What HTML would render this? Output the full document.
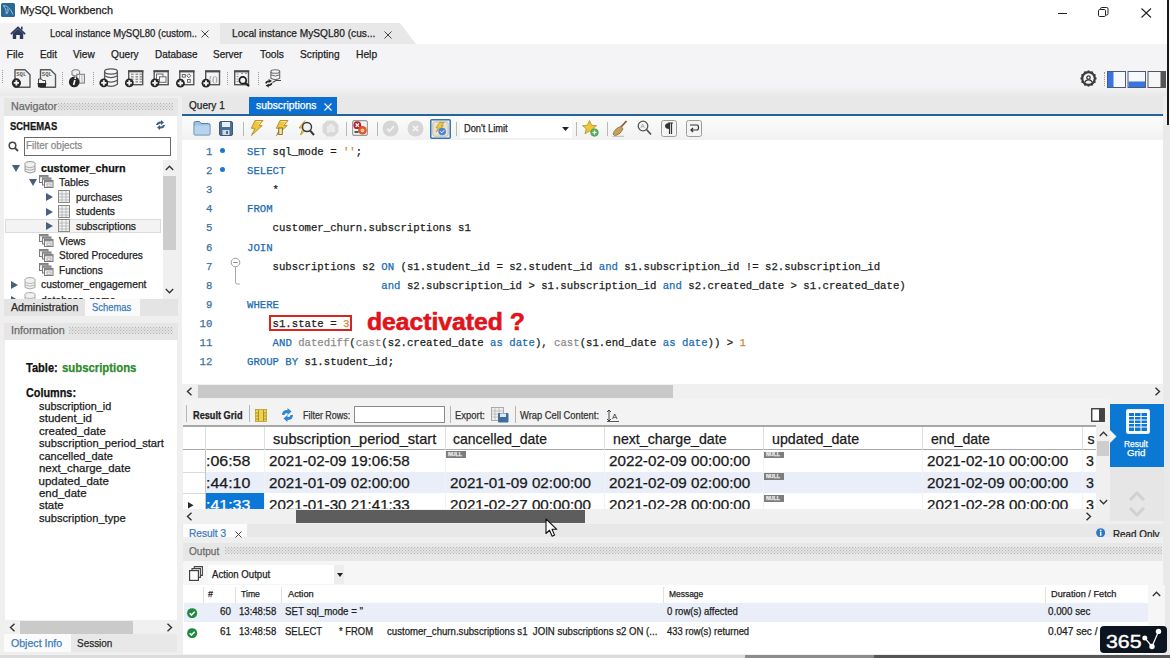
<!DOCTYPE html>
<html><head><meta charset="utf-8">
<style>
*{margin:0;padding:0;box-sizing:border-box}
html,body{width:1170px;height:658px;overflow:hidden;background:#ededed;font-family:"Liberation Sans",sans-serif;color:#222;position:relative}
.a{position:absolute}
.t{position:absolute;white-space:pre;line-height:1;transform-origin:0 0;-webkit-text-stroke:0.25px currentColor}
</style></head><body>
<div class="a" style="left:0px;top:0px;width:1170px;height:43.5px;background:#ffffff;"></div>
<div class="a" style="left:0px;top:22.7px;width:220px;height:21px;background:#f3f3f4;"></div>
<div class="a" style="left:0px;top:43.5px;width:1170px;height:53px;background:#f4f4f6;"></div>
<div class="a" style="left:0;top:86px;width:1170px;height:10px;background:linear-gradient(#f4f4f6,#e9e9e9)"></div>
<svg class="a" style="left:1.3px;top:2.9px;" width="14" height="14" viewBox="0 0 14 14"><rect x="0" y="0" width="14" height="14" rx="1.5" fill="#2a6896"/><path d="M2.3 2.5 Q8 2.5 12 11.5 M2.3 2.5 Q3.5 5 4.8 6 Q5.5 8.5 5 10.5 Q6 11.5 6.5 10 Q7.8 7.5 6.5 5.5" fill="none" stroke="#a9cbe6" stroke-width="0.9"/></svg>
<div class="t" id="t0" style="left:20px;top:5.11px;font-size:10.5px;color:#1a1a1a;font-weight:400;font-family:'Liberation Sans',sans-serif;transform:scaleX(1.0282);">MySQL Workbench</div>
<div class="a" style="left:1058px;top:13px;width:9px;height:1px;background:#222;"></div>
<svg class="a" style="left:1098px;top:7px;" width="12" height="11" viewBox="0 0 12 11"><rect x="0.5" y="2.5" width="7" height="7" rx="1.2" fill="none" stroke="#222" stroke-width="1"/><path d="M2.5 2.5 V1.8 Q2.5 0.5 3.8 0.5 H8.7 Q10 0.5 10 1.8 V6.7 Q10 8 8.7 8 H8" fill="none" stroke="#222" stroke-width="1"/></svg>
<svg class="a" style="left:1141px;top:8px;" width="11" height="10" viewBox="0 0 11 10"><path d="M0.5 0.5 L10 9.5 M10 0.5 L0.5 9.5" stroke="#222" stroke-width="1.1"/></svg>
<svg class="a" style="left:10px;top:26px;" width="16" height="13" viewBox="0 0 16 13"><path d="M0.9 8.2 L8 1.4 L15.1 8.2" fill="none" stroke="#2b3a5a" stroke-width="1.8"/><path d="M2.8 7.6 L8 2.8 L13.2 7.6 V13 H9.8 V9 H6.2 V13 H2.8 Z" fill="#2b3a5a"/><rect x="11" y="0.6" width="1.6" height="3" fill="#2b3a5a"/></svg>
<div class="t" id="t1" style="left:49.5px;top:28.23px;font-size:10.6px;color:#1e1e1e;font-weight:400;font-family:'Liberation Sans',sans-serif;transform:scaleX(0.8948);">Local instance MySQL80 (custom..</div>
<svg class="a" style="left:201px;top:30px;" width="8" height="8" viewBox="0 0 8 8"><path d="M0.5 0.5 L7.5 7.5 M7.5 0.5 L0.5 7.5" stroke="#444" stroke-width="1"/></svg>
<svg class="a" style="left:219px;top:22.7px;" width="200" height="21" viewBox="0 0 200 21"><path d="M1 0 H181 L197 21 H1 Z" fill="#e8e8e8"/></svg>
<div class="t" id="t2" style="left:232.2px;top:27.63px;font-size:10.6px;color:#1e1e1e;font-weight:400;font-family:'Liberation Sans',sans-serif;transform:scaleX(0.9588);">Local instance MySQL80 (cus...</div>
<svg class="a" style="left:384px;top:31px;" width="8" height="8" viewBox="0 0 8 8"><path d="M0.5 0.5 L7.5 7.5 M7.5 0.5 L0.5 7.5" stroke="#444" stroke-width="1"/></svg>
<div class="t" id="t3" style="left:6.6px;top:49.01px;font-size:10.5px;color:#1e1e1e;font-weight:400;font-family:'Liberation Sans',sans-serif;">File</div>
<div class="t" id="t4" style="left:39.5px;top:49.01px;font-size:10.5px;color:#1e1e1e;font-weight:400;font-family:'Liberation Sans',sans-serif;transform:scaleX(0.9340);">Edit</div>
<div class="t" id="t5" style="left:73.3px;top:49.01px;font-size:10.5px;color:#1e1e1e;font-weight:400;font-family:'Liberation Sans',sans-serif;transform:scaleX(0.9611);">View</div>
<div class="t" id="t6" style="left:110.6px;top:49.01px;font-size:10.5px;color:#1e1e1e;font-weight:400;font-family:'Liberation Sans',sans-serif;transform:scaleX(0.9652);">Query</div>
<div class="t" id="t7" style="left:154.6px;top:49.01px;font-size:10.5px;color:#1e1e1e;font-weight:400;font-family:'Liberation Sans',sans-serif;transform:scaleX(0.9432);">Database</div>
<div class="t" id="t8" style="left:213.3px;top:49.01px;font-size:10.5px;color:#1e1e1e;font-weight:400;font-family:'Liberation Sans',sans-serif;transform:scaleX(0.9503);">Server</div>
<div class="t" id="t9" style="left:260px;top:49.01px;font-size:10.5px;color:#1e1e1e;font-weight:400;font-family:'Liberation Sans',sans-serif;transform:scaleX(0.9790);">Tools</div>
<div class="t" id="t10" style="left:300px;top:49.01px;font-size:10.5px;color:#1e1e1e;font-weight:400;font-family:'Liberation Sans',sans-serif;transform:scaleX(0.9692);">Scripting</div>
<div class="t" id="t11" style="left:355.6px;top:49.01px;font-size:10.5px;color:#1e1e1e;font-weight:400;font-family:'Liberation Sans',sans-serif;transform:scaleX(0.9764);">Help</div>
<div class="a" style="left:2px;top:70px;width:1px;height:13px;border-left:1px dotted #9a9a9a"></div>
<svg class="a" style="left:0px;top:64px;" width="300" height="28" viewBox="0 0 300 28"><path d="M15 5.8 H25 L30 10.8 V23.3 H15 Z" fill="#f2f2f2" stroke="#585858" stroke-width="1.4" stroke-linejoin="round"/><text x="16.2" y="11.6" font-size="5.6" font-family="Liberation Mono" font-weight="bold" fill="#5a5a5a">SQL</text><circle cx="16.4" cy="18.9" r="4.6" fill="#262626"/><path d="M13.799999999999999 18.9 H19.0 M16.4 16.299999999999997 V21.5" stroke="#f4f4f4" stroke-width="1.9"/><path d="M40.5 5.8 H50.5 L55.5 10.8 V23.3 H40.5 Z" fill="#f2f2f2" stroke="#585858" stroke-width="1.4" stroke-linejoin="round"/><text x="41.8" y="11.6" font-size="5.6" font-family="Liberation Mono" font-weight="bold" fill="#5a5a5a">SQL</text><path d="M38.5 15 H41.5 L42.5 16.5 H45.5 V22.8 H38.5 Z" fill="#f2f2f2" stroke="#444" stroke-width="1"/><path d="M37.5 19 H46.5 L45.5 23.3 H38.2 Z" fill="#2a2a2a"/><ellipse cx="75.8" cy="7.3" rx="3.8" ry="1.6" fill="#eee" stroke="#777" stroke-width="1"/><path d="M72 7.3 V11 Q75.8 13 79.6 11 V7.3" fill="#eee" stroke="#777" stroke-width="1"/><rect x="76.8" y="10.3" width="7.6" height="8.8" fill="#f2f2f2" stroke="#777" stroke-width="1"/><path d="M79.5 10.5 V19 M82 10.5 V19" stroke="#aaa" stroke-width="0.8"/><circle cx="74.2" cy="17.9" r="5.3" fill="#262626"/><path d="M74.9 16 L73.6 21" stroke="#fff" stroke-width="1.6"/><circle cx="75.3" cy="14.2" r="0.9" fill="#fff"/><path d="M104.6 7.5 V20.3 Q111 24.5 117.4 20.3 V7.5" fill="#f7f7f7" stroke="#585858" stroke-width="1.3"/><ellipse cx="111" cy="7.5" rx="6.4" ry="2.6" fill="#f7f7f7" stroke="#585858" stroke-width="1.3"/><path d="M104.6 11.8 Q111 15.6 117.4 11.8 M104.6 16.3 Q111 20.1 117.4 16.3" fill="none" stroke="#585858" stroke-width="1.2"/><circle cx="103.8" cy="18.9" r="4.4" fill="#262626"/><path d="M101.2 18.9 H106.39999999999999 M103.8 16.299999999999997 V21.5" stroke="#f4f4f4" stroke-width="1.9"/><rect x="128.7" y="7.0" width="14.000000000000005" height="13.699999999999998" fill="#f4f4f4" stroke="#565656" stroke-width="1.4"/><rect x="128" y="6.3" width="15.400000000000006" height="2" fill="#4a4a4a"/><rect x="131" y="9.5" width="2.6" height="1.6" fill="#9a9a9a"/><rect x="131" y="12" width="2.6" height="1.6" fill="#9a9a9a"/><rect x="131" y="14.5" width="2.6" height="1.6" fill="#9a9a9a"/><rect x="131" y="17" width="2.6" height="1.6" fill="#9a9a9a"/><rect x="135.5" y="9.5" width="2.6" height="1.6" fill="#9a9a9a"/><rect x="135.5" y="12" width="2.6" height="1.6" fill="#9a9a9a"/><rect x="135.5" y="14.5" width="2.6" height="1.6" fill="#9a9a9a"/><rect x="135.5" y="17" width="2.6" height="1.6" fill="#9a9a9a"/><rect x="139.5" y="9.5" width="2.6" height="1.6" fill="#9a9a9a"/><rect x="139.5" y="12" width="2.6" height="1.6" fill="#9a9a9a"/><rect x="139.5" y="14.5" width="2.6" height="1.6" fill="#9a9a9a"/><rect x="139.5" y="17" width="2.6" height="1.6" fill="#9a9a9a"/><circle cx="129.3" cy="18.9" r="4.4" fill="#262626"/><path d="M126.70000000000002 18.9 H131.9 M129.3 16.299999999999997 V21.5" stroke="#f4f4f4" stroke-width="1.9"/><rect x="154.2" y="7.0" width="14.000000000000005" height="13.699999999999998" fill="#f4f4f4" stroke="#565656" stroke-width="1.4"/><rect x="153.5" y="6.3" width="15.400000000000006" height="2" fill="#4a4a4a"/><rect x="156.5" y="10" width="6.5" height="5.5" fill="none" stroke="#6a6a6a" stroke-width="1"/><rect x="159.5" y="12.8" width="6.5" height="5.5" fill="#f4f4f4" stroke="#6a6a6a" stroke-width="1"/><circle cx="154.9" cy="18.9" r="4.4" fill="#262626"/><path d="M152.3 18.9 H157.5 M154.9 16.299999999999997 V21.5" stroke="#f4f4f4" stroke-width="1.9"/><rect x="179.79999999999998" y="7.1000000000000005" width="14.000000000000005" height="13.599999999999998" fill="#f4f4f4" stroke="#565656" stroke-width="1.4"/><rect x="179.1" y="6.4" width="15.400000000000006" height="2" fill="#4a4a4a"/><rect x="182.3" y="10.5" width="3" height="2.6" fill="none" stroke="#6a6a6a" stroke-width="1"/><path d="M188.8 9.8 L190.8 11.8 L188.8 13.8 L186.8 11.8 Z" fill="none" stroke="#6a6a6a" stroke-width="1"/><rect x="187.5" y="15.5" width="2.8" height="2.8" fill="none" stroke="#6a6a6a" stroke-width="1"/><circle cx="180.4" cy="19.2" r="4.4" fill="#262626"/><path d="M177.8 19.2 H183.0 M180.4 16.599999999999998 V21.8" stroke="#f4f4f4" stroke-width="1.9"/><rect x="205.7" y="7.1000000000000005" width="13.799999999999988" height="13.599999999999998" fill="#f4f4f4" stroke="#565656" stroke-width="1.4"/><rect x="205" y="6.4" width="15.199999999999989" height="2" fill="#4a4a4a"/><text x="208.3" y="17.8" font-size="8" font-family="Liberation Serif" fill="#777">{()</text><circle cx="206" cy="19.2" r="4.4" fill="#262626"/><path d="M203.4 19.2 H208.6 M206 16.599999999999998 V21.8" stroke="#f4f4f4" stroke-width="1.9"/><rect x="234.7" y="7.1000000000000005" width="13.799999999999988" height="13.599999999999998" fill="#f4f4f4" stroke="#565656" stroke-width="1.4"/><rect x="234" y="6.4" width="15.199999999999989" height="2" fill="#4a4a4a"/><path d="M236.5 10 H238.5 M236.5 12.5 H238.5 M236.5 15 H238.5 M236.5 17.5 H238.5 M241 9.5 H243 M245 9.5 H247" stroke="#9a9a9a" stroke-width="1"/><circle cx="242.8" cy="16.2" r="3.4" fill="#f4f4f4" stroke="#1e1e1e" stroke-width="1.7"/><path d="M245.3 18.7 L249 22.3" stroke="#1e1e1e" stroke-width="2"/><path d="M270.9 7.5 V14.3 Q275.3 17 279.7 14.3 V7.5" fill="#f4f4f4" stroke="#6a6a6a" stroke-width="1.1"/><ellipse cx="275.3" cy="7.5" rx="4.4" ry="1.8" fill="#f4f4f4" stroke="#6a6a6a" stroke-width="1.1"/><path d="M270.9 10.8 Q275.3 13.3 279.7 10.8" fill="none" stroke="#6a6a6a" stroke-width="1"/><path d="M265 19 Q266 16.3 269 16.3 L268.3 14.8 L272 17 L268.3 19.2 L269 18 Q267 18 266.5 19.8 Z" fill="#262626"/><path d="M272.5 19.5 Q271.5 22.3 268.5 22.3 L269.2 23.8 L265.5 21.6 L269.2 19.4 L268.5 20.6 Q270.5 20.6 271 18.8 Z" fill="#262626"/><path d="M272.5 18.5 L276 16.5 H281" stroke="#444" stroke-width="1.2" fill="none"/></svg>
<div class="a" style="left:62px;top:72px;width:1px;height:13px;border-left:1px dotted #9a9a9a"></div>
<div class="a" style="left:93px;top:72px;width:1px;height:13px;border-left:1px dotted #9a9a9a"></div>
<div class="a" style="left:227px;top:72px;width:1px;height:13px;border-left:1px dotted #9a9a9a"></div>
<div class="a" style="left:258px;top:72px;width:1px;height:13px;border-left:1px dotted #9a9a9a"></div>
<svg class="a" style="left:1080px;top:70px;" width="17" height="17" viewBox="0 0 17 17"><rect x="7.6" y="0.4" width="1.8" height="2.4" fill="#3a3a3a" transform="rotate(0 8.5 8.5)"/><rect x="7.6" y="0.4" width="1.8" height="2.4" fill="#3a3a3a" transform="rotate(30 8.5 8.5)"/><rect x="7.6" y="0.4" width="1.8" height="2.4" fill="#3a3a3a" transform="rotate(60 8.5 8.5)"/><rect x="7.6" y="0.4" width="1.8" height="2.4" fill="#3a3a3a" transform="rotate(90 8.5 8.5)"/><rect x="7.6" y="0.4" width="1.8" height="2.4" fill="#3a3a3a" transform="rotate(120 8.5 8.5)"/><rect x="7.6" y="0.4" width="1.8" height="2.4" fill="#3a3a3a" transform="rotate(150 8.5 8.5)"/><rect x="7.6" y="0.4" width="1.8" height="2.4" fill="#3a3a3a" transform="rotate(180 8.5 8.5)"/><rect x="7.6" y="0.4" width="1.8" height="2.4" fill="#3a3a3a" transform="rotate(210 8.5 8.5)"/><rect x="7.6" y="0.4" width="1.8" height="2.4" fill="#3a3a3a" transform="rotate(240 8.5 8.5)"/><rect x="7.6" y="0.4" width="1.8" height="2.4" fill="#3a3a3a" transform="rotate(270 8.5 8.5)"/><rect x="7.6" y="0.4" width="1.8" height="2.4" fill="#3a3a3a" transform="rotate(300 8.5 8.5)"/><rect x="7.6" y="0.4" width="1.8" height="2.4" fill="#3a3a3a" transform="rotate(330 8.5 8.5)"/><circle cx="8.5" cy="8.5" r="6.3" fill="none" stroke="#3a3a3a" stroke-width="2.2"/><circle cx="8.5" cy="7.6" r="1.7" fill="#fff" stroke="#3a3a3a" stroke-width="1.3"/><path d="M5 12.3 Q5.5 9.8 8.5 9.8 Q11.5 9.8 12 12.3" fill="none" stroke="#3a3a3a" stroke-width="1.3"/></svg>
<div class="a" style="left:1104px;top:72px;width:1px;height:14px;border-left:1px dotted #9a9a9a"></div>
<svg class="a" style="left:1107px;top:70px;" width="60" height="18" viewBox="0 0 60 18"><rect x="0.5" y="1.5" width="18" height="16" fill="#f6f8fc" stroke="#4a5a78" stroke-width="1"/><rect x="1" y="2" width="5.5" height="15" fill="#3b74e0"/><rect x="21" y="1.5" width="17.5" height="16" fill="#f6f8fc" stroke="#4a5a78" stroke-width="1"/><rect x="21.5" y="11.5" width="16.5" height="5.5" fill="#3b74e0"/><rect x="41" y="1.5" width="17.5" height="16" fill="#f6f6f6" stroke="#555" stroke-width="1"/><rect x="53.5" y="2" width="5" height="15" fill="#555"/></svg>
<div class="a" style="left:0px;top:96px;width:1170px;height:562px;background:#efefef;"></div>
<div class="a" style="left:1163px;top:125px;width:7px;height:533px;background:#e9e9e9;"></div>
<div class="a" style="left:1167.2px;top:0px;width:1.4px;height:124.5px;background:#1a1a1a;"></div>
<div class="a" style="left:1168.6px;top:0px;width:1.4px;height:124.5px;background:#f8f8f8;"></div>
<div class="a" style="left:4px;top:98px;width:174px;height:18px;background:#e6e6e6;"></div>
<div class="t" id="t12" style="left:11px;top:100.51px;font-size:10.5px;color:#6a6a6a;font-weight:400;font-family:'Liberation Sans',sans-serif;transform:scaleX(1.0233);">Navigator</div>
<svg class="a" style="left:58px;top:103px;" width="115" height="7" viewBox="0 0 115 7"><defs><pattern id="dp1" width="3" height="3" patternUnits="userSpaceOnUse"><rect x="0" y="0" width="1.1" height="1.1" fill="#b4b4b4"/><rect x="1.5" y="1.5" width="1.1" height="1.1" fill="#b4b4b4"/></pattern></defs><rect width="115" height="7" fill="url(#dp1)"/></svg>
<div class="a" style="left:4px;top:116px;width:173px;height:183px;background:#ffffff;"></div>
<div class="t" id="t13" style="left:10px;top:120.81px;font-size:10.5px;color:#161616;font-weight:700;font-family:'Liberation Sans',sans-serif;transform:scaleX(0.8988);">SCHEMAS</div>
<svg class="a" style="left:154px;top:120px;" width="13" height="10" viewBox="0 0 13 10"><path d="M2 5 Q3 1 7 1.5 L7 0 L10 2.5 L7 5 L7 3.5 Q4.5 3.5 4 5 Z M11 5 Q10 9 6 8.5 L6 10 L3 7.5 L6 5 L6 6.5 Q8.5 6.5 9 5 Z" fill="#3b5f8a"/></svg>
<svg class="a" style="left:8px;top:141px;" width="11" height="11" viewBox="0 0 11 11"><circle cx="4.5" cy="4.5" r="3.3" fill="none" stroke="#444" stroke-width="1.5"/><path d="M7 7 L10 10" stroke="#444" stroke-width="1.8"/></svg>
<div class="a" style="left:23.8px;top:137.4px;width:147.7px;height:18.4px;background:#ffffff;border:1px solid #6a6a6a"></div>
<div class="t" id="t14" style="left:26px;top:141.23px;font-size:10px;color:#8a8a8a;font-weight:400;font-family:'Liberation Sans',sans-serif;transform:scaleX(0.9932);">Filter objects</div>
<svg class="a" style="left:11.5px;top:164.5px" width="8" height="7" viewBox="0 0 8 7"><path d="M0 0 H8 L4 7 Z" fill="#4a5f80"/></svg>
<svg class="a" style="left:23.5px;top:160.8px" width="12" height="13" viewBox="0 0 12 13"><ellipse cx="6" cy="2.5" rx="5" ry="2" fill="#f0f0f0" stroke="#999"/><path d="M1 2.5 V10.5 Q6 13.5 11 10.5 V2.5" fill="#f0f0f0" stroke="#999"/><path d="M1 5.5 Q6 8 11 5.5 M1 8 Q6 10.5 11 8" fill="none" stroke="#999" stroke-width="0.8"/></svg>
<div class="t" id="t15" style="left:41.2px;top:162.71px;font-size:10.5px;color:#111;font-weight:700;font-family:'Liberation Sans',sans-serif;transform:scaleX(1.0282);">customer_churn</div>
<svg class="a" style="left:28.5px;top:179.3px" width="8" height="7" viewBox="0 0 8 7"><path d="M0 0 H8 L4 7 Z" fill="#4a5f80"/></svg>
<svg class="a" style="left:39px;top:174.5px" width="15" height="13" viewBox="0 0 15 13"><rect x="0.5" y="0.5" width="8.5" height="7" fill="#f0f0f0" stroke="#7a7a7a" stroke-width="1"/><rect x="0.5" y="0.5" width="8.5" height="1.8" fill="#8a8a8a"/><rect x="3.5" y="3" width="8.5" height="7" fill="#f0f0f0" stroke="#7a7a7a" stroke-width="1"/><rect x="3.5" y="3" width="8.5" height="1.8" fill="#8a8a8a"/><rect x="5.5" y="5.5" width="8.5" height="7" fill="#f0f0f0" stroke="#7a7a7a" stroke-width="1"/><rect x="5.5" y="5.5" width="8.5" height="1.8" fill="#8a8a8a"/><rect x="8" y="9" width="4" height="2.5" fill="none" stroke="#9a9a9a" stroke-width="0.7"/></svg>
<div class="t" id="t16" style="left:59px;top:177.73px;font-size:10px;color:#1e1e1e;font-weight:400;font-family:'Liberation Sans',sans-serif;transform:scaleX(1.0378);">Tables</div>
<div class="a" style="left:5.2px;top:219.4px;width:155.6px;height:13.6px;background:#f3f3f3;border:1px solid #dcdcdc"></div>
<svg class="a" style="left:45.5px;top:193.0px" width="7" height="8" viewBox="0 0 7 8"><path d="M0 0 L7 4 L0 8 Z" fill="#4a5f80"/></svg>
<svg class="a" style="left:57.7px;top:190.0px" width="12" height="13" viewBox="0 0 12 13"><rect x="0.5" y="0.5" width="11" height="12" fill="#f2f2f2" stroke="#888"/><path d="M4 1 V12 M8 1 V12 M1 4 H11 M1 7 H11 M1 10 H11" stroke="#aaa" stroke-width="0.7"/></svg>
<div class="t" id="t17" style="left:76px;top:192.53px;font-size:10px;color:#1e1e1e;font-weight:400;font-family:'Liberation Sans',sans-serif;transform:scaleX(1.0056);">purchases</div>
<svg class="a" style="left:45.5px;top:207.7px" width="7" height="8" viewBox="0 0 7 8"><path d="M0 0 L7 4 L0 8 Z" fill="#4a5f80"/></svg>
<svg class="a" style="left:57.7px;top:204.7px" width="12" height="13" viewBox="0 0 12 13"><rect x="0.5" y="0.5" width="11" height="12" fill="#f2f2f2" stroke="#888"/><path d="M4 1 V12 M8 1 V12 M1 4 H11 M1 7 H11 M1 10 H11" stroke="#aaa" stroke-width="0.7"/></svg>
<div class="t" id="t18" style="left:76px;top:207.23px;font-size:10px;color:#1e1e1e;font-weight:400;font-family:'Liberation Sans',sans-serif;transform:scaleX(1.0314);">students</div>
<svg class="a" style="left:45.5px;top:222.4px" width="7" height="8" viewBox="0 0 7 8"><path d="M0 0 L7 4 L0 8 Z" fill="#4a5f80"/></svg>
<svg class="a" style="left:57.7px;top:219.4px" width="12" height="13" viewBox="0 0 12 13"><rect x="0.5" y="0.5" width="11" height="12" fill="#f2f2f2" stroke="#888"/><path d="M4 1 V12 M8 1 V12 M1 4 H11 M1 7 H11 M1 10 H11" stroke="#aaa" stroke-width="0.7"/></svg>
<div class="t" id="t19" style="left:76px;top:221.94px;font-size:10px;color:#1e1e1e;font-weight:400;font-family:'Liberation Sans',sans-serif;transform:scaleX(1.0281);">subscriptions</div>
<svg class="a" style="left:39px;top:234.0px" width="15" height="13" viewBox="0 0 15 13"><rect x="0.5" y="0.5" width="8.5" height="7" fill="#f0f0f0" stroke="#7a7a7a" stroke-width="1"/><rect x="0.5" y="0.5" width="8.5" height="1.8" fill="#8a8a8a"/><rect x="3.5" y="3" width="8.5" height="7" fill="#f0f0f0" stroke="#7a7a7a" stroke-width="1"/><rect x="3.5" y="3" width="8.5" height="1.8" fill="#8a8a8a"/><rect x="5.5" y="5.5" width="8.5" height="7" fill="#f0f0f0" stroke="#7a7a7a" stroke-width="1"/><rect x="5.5" y="5.5" width="8.5" height="1.8" fill="#8a8a8a"/><rect x="8" y="9" width="4" height="2.5" fill="none" stroke="#9a9a9a" stroke-width="0.7"/></svg>
<div class="t" id="t20" style="left:58.6px;top:236.53px;font-size:10px;color:#1e1e1e;font-weight:400;font-family:'Liberation Sans',sans-serif;transform:scaleX(0.9962);">Views</div>
<svg class="a" style="left:39px;top:248.60000000000002px" width="15" height="13" viewBox="0 0 15 13"><rect x="0.5" y="0.5" width="8.5" height="7" fill="#f0f0f0" stroke="#7a7a7a" stroke-width="1"/><rect x="0.5" y="0.5" width="8.5" height="1.8" fill="#8a8a8a"/><rect x="3.5" y="3" width="8.5" height="7" fill="#f0f0f0" stroke="#7a7a7a" stroke-width="1"/><rect x="3.5" y="3" width="8.5" height="1.8" fill="#8a8a8a"/><rect x="5.5" y="5.5" width="8.5" height="7" fill="#f0f0f0" stroke="#7a7a7a" stroke-width="1"/><rect x="5.5" y="5.5" width="8.5" height="1.8" fill="#8a8a8a"/><rect x="8" y="9" width="4" height="2.5" fill="none" stroke="#9a9a9a" stroke-width="0.7"/></svg>
<div class="t" id="t21" style="left:58.6px;top:251.14px;font-size:10px;color:#1e1e1e;font-weight:400;font-family:'Liberation Sans',sans-serif;transform:scaleX(1.0061);">Stored Procedures</div>
<svg class="a" style="left:39px;top:263.2px" width="15" height="13" viewBox="0 0 15 13"><rect x="0.5" y="0.5" width="8.5" height="7" fill="#f0f0f0" stroke="#7a7a7a" stroke-width="1"/><rect x="0.5" y="0.5" width="8.5" height="1.8" fill="#8a8a8a"/><rect x="3.5" y="3" width="8.5" height="7" fill="#f0f0f0" stroke="#7a7a7a" stroke-width="1"/><rect x="3.5" y="3" width="8.5" height="1.8" fill="#8a8a8a"/><rect x="5.5" y="5.5" width="8.5" height="7" fill="#f0f0f0" stroke="#7a7a7a" stroke-width="1"/><rect x="5.5" y="5.5" width="8.5" height="1.8" fill="#8a8a8a"/><rect x="8" y="9" width="4" height="2.5" fill="none" stroke="#9a9a9a" stroke-width="0.7"/></svg>
<div class="t" id="t22" style="left:58.6px;top:265.74px;font-size:10px;color:#1e1e1e;font-weight:400;font-family:'Liberation Sans',sans-serif;transform:scaleX(1.0079);">Functions</div>
<svg class="a" style="left:10.5px;top:281px" width="7" height="8" viewBox="0 0 7 8"><path d="M0 0 L7 4 L0 8 Z" fill="#4a5f80"/></svg>
<svg class="a" style="left:23.6px;top:277px" width="12" height="13" viewBox="0 0 12 13"><ellipse cx="6" cy="2.5" rx="5" ry="2" fill="#f0f0f0" stroke="#aaa"/><path d="M1 2.5 V10.5 Q6 13.5 11 10.5 V2.5" fill="#f0f0f0" stroke="#aaa"/><path d="M1 5.5 Q6 8 11 5.5 M1 8 Q6 10.5 11 8" fill="none" stroke="#aaa" stroke-width="0.8"/></svg>
<div class="t" id="t23" style="left:41.4px;top:280.04px;font-size:10px;color:#1e1e1e;font-weight:400;font-family:'Liberation Sans',sans-serif;transform:scaleX(1.0313);">customer_engagement</div>
<div class="a" style="left:4px;top:290px;width:158px;height:9px;overflow:hidden"><svg class="a" style="left:6.5px;top:6px" width="7" height="8" viewBox="0 0 7 8"><path d="M0 0 L7 4 L0 8 Z" fill="#4a5f80"/></svg><svg class="a" style="left:19.6px;top:2px" width="12" height="13" viewBox="0 0 12 13"><ellipse cx="6" cy="2.5" rx="5" ry="2" fill="#f0f0f0" stroke="#aaa"/><path d="M1 2.5 V10.5 Q6 13.5 11 10.5 V2.5" fill="#f0f0f0" stroke="#aaa"/><path d="M1 5.5 Q6 8 11 5.5 M1 8 Q6 10.5 11 8" fill="none" stroke="#aaa" stroke-width="0.8"/></svg><div class="t" style="left:37.4px;top:5.6px;font-size:10px;color:#1e1e1e;transform:scaleX(1.04)">database_name</div></div>
<div class="a" style="left:162.6px;top:160px;width:14px;height:139px;background:#f0f0f0;"></div>
<div class="a" style="left:162.6px;top:176px;width:13px;height:73.7px;background:#cdcdcd;"></div>
<svg class="a" style="left:165px;top:165px;" width="9" height="6" viewBox="0 0 9 6"><path d="M0.8 5 L4.5 1.2 L8.2 5" fill="none" stroke="#333" stroke-width="1.3"/></svg>
<svg class="a" style="left:165px;top:288px;" width="9" height="6" viewBox="0 0 9 6"><path d="M0.8 1 L4.5 4.8 L8.2 1" fill="none" stroke="#333" stroke-width="1.3"/></svg>
<div class="a" style="left:4px;top:299px;width:174px;height:17px;background:#e4e4e4;"></div>
<div class="a" style="left:85.3px;top:299px;width:54.3px;height:17px;background:#fafafa;"></div>
<div class="t" id="t24" style="left:10.9px;top:301.51px;font-size:10.5px;color:#2a2a2a;font-weight:400;font-family:'Liberation Sans',sans-serif;transform:scaleX(1.0131);">Administration</div>
<div class="t" id="t25" style="left:91.6px;top:301.51px;font-size:10.5px;color:#3c7bbd;font-weight:400;font-family:'Liberation Sans',sans-serif;transform:scaleX(0.8954);">Schemas</div>
<div class="a" style="left:4px;top:322.6px;width:174px;height:17.6px;background:#e6e6e6;"></div>
<div class="t" id="t26" style="left:11.4px;top:324.91px;font-size:10.5px;color:#6a6a6a;font-weight:400;font-family:'Liberation Sans',sans-serif;transform:scaleX(1.0242);">Information</div>
<svg class="a" style="left:69px;top:327px;" width="104" height="7" viewBox="0 0 104 7"><defs><pattern id="dp2" width="3" height="3" patternUnits="userSpaceOnUse"><rect x="0" y="0" width="1.1" height="1.1" fill="#b4b4b4"/><rect x="1.5" y="1.5" width="1.1" height="1.1" fill="#b4b4b4"/></pattern></defs><rect width="104" height="7" fill="url(#dp2)"/></svg>
<div class="a" style="left:4.5px;top:340px;width:172px;height:280.3px;background:#ffffff;"></div>
<div class="t" id="t27" style="left:26px;top:362.14px;font-size:12px;color:#111;font-weight:700;font-family:'Liberation Sans',sans-serif;transform:scaleX(0.9201);">Table:</div>
<div class="t" id="t28" style="left:61.9px;top:362.14px;font-size:12px;color:#2d8a2d;font-weight:700;font-family:'Liberation Sans',sans-serif;transform:scaleX(0.9455);">subscriptions</div>
<div class="t" id="t29" style="left:26px;top:386.84px;font-size:12px;color:#111;font-weight:700;font-family:'Liberation Sans',sans-serif;transform:scaleX(0.9034);">Columns:</div>
<div class="t" id="t30" style="left:38.5px;top:400.87px;font-size:11.5px;color:#1a1a1a;font-weight:400;font-family:'Liberation Sans',sans-serif;transform:scaleX(0.9424);">subscription_id</div>
<div class="t" id="t31" style="left:38.5px;top:413.32px;font-size:11.5px;color:#1a1a1a;font-weight:400;font-family:'Liberation Sans',sans-serif;transform:scaleX(0.9966);">student_id</div>
<div class="t" id="t32" style="left:38.5px;top:425.77px;font-size:11.5px;color:#1a1a1a;font-weight:400;font-family:'Liberation Sans',sans-serif;transform:scaleX(0.9949);">created_date</div>
<div class="t" id="t33" style="left:38.5px;top:438.22px;font-size:11.5px;color:#1a1a1a;font-weight:400;font-family:'Liberation Sans',sans-serif;transform:scaleX(0.9720);">subscription_period_start</div>
<div class="t" id="t34" style="left:38.5px;top:450.67px;font-size:11.5px;color:#1a1a1a;font-weight:400;font-family:'Liberation Sans',sans-serif;transform:scaleX(0.9538);">cancelled_date</div>
<div class="t" id="t35" style="left:38.5px;top:463.12px;font-size:11.5px;color:#1a1a1a;font-weight:400;font-family:'Liberation Sans',sans-serif;transform:scaleX(0.9937);">next_charge_date</div>
<div class="t" id="t36" style="left:38.5px;top:475.57px;font-size:11.5px;color:#1a1a1a;font-weight:400;font-family:'Liberation Sans',sans-serif;">updated_date</div>
<div class="t" id="t37" style="left:38.5px;top:488.02px;font-size:11.5px;color:#1a1a1a;font-weight:400;font-family:'Liberation Sans',sans-serif;transform:scaleX(0.9902);">end_date</div>
<div class="t" id="t38" style="left:38.5px;top:500.47px;font-size:11.5px;color:#1a1a1a;font-weight:400;font-family:'Liberation Sans',sans-serif;transform:scaleX(0.9905);">state</div>
<div class="t" id="t39" style="left:38.5px;top:512.92px;font-size:11.5px;color:#1a1a1a;font-weight:400;font-family:'Liberation Sans',sans-serif;transform:scaleX(0.9676);">subscription_type</div>
<div class="a" style="left:4.5px;top:620.3px;width:172.5px;height:13.7px;background:#f0f0f0;"></div>
<div class="a" style="left:20.3px;top:621px;width:112.7px;height:12.5px;background:#cacaca;"></div>
<svg class="a" style="left:9px;top:623px;" width="7" height="9" viewBox="0 0 7 9"><path d="M5.5 0.8 L1.5 4.5 L5.5 8.2" fill="none" stroke="#333" stroke-width="1.4"/></svg>
<svg class="a" style="left:166px;top:623px;" width="7" height="9" viewBox="0 0 7 9"><path d="M1.5 0.8 L5.5 4.5 L1.5 8.2" fill="none" stroke="#333" stroke-width="1.4"/></svg>
<div class="a" style="left:4px;top:634px;width:173px;height:18px;background:#e8e8e8;"></div>
<div class="a" style="left:4px;top:634px;width:66.6px;height:18px;background:#fbfbfb;"></div>
<div class="t" id="t40" style="left:11px;top:638.11px;font-size:10.5px;color:#3c7bbd;font-weight:400;font-family:'Liberation Sans',sans-serif;transform:scaleX(1.0082);">Object Info</div>
<div class="t" id="t41" style="left:76.6px;top:638.11px;font-size:10.5px;color:#2a2a2a;font-weight:400;font-family:'Liberation Sans',sans-serif;transform:scaleX(0.9476);">Session</div>
<div class="a" style="left:0px;top:654.5px;width:1170px;height:1px;background:#d6d6d6;"></div>
<div class="a" style="left:182px;top:96.4px;width:981px;height:17.6px;background:#e8e8e8;"></div>
<div class="t" id="t42" style="left:188.8px;top:99.61px;font-size:10.5px;color:#222;font-weight:400;font-family:'Liberation Sans',sans-serif;transform:scaleX(0.9583);">Query 1</div>
<div class="a" style="left:249px;top:96.5px;width:88px;height:18px;background:#0b6fd1;"></div>
<div class="t" id="t43" style="left:255.8px;top:99.61px;font-size:10.5px;color:#ffffff;font-weight:400;font-family:'Liberation Sans',sans-serif;transform:scaleX(0.9856);">subscriptions</div>
<svg class="a" style="left:323.5px;top:102.5px;" width="8" height="8" viewBox="0 0 8 8"><path d="M0.5 0.5 L7.5 7.5 M7.5 0.5 L0.5 7.5" stroke="#fff" stroke-width="1.1"/></svg>
<div class="a" style="left:182px;top:113.6px;width:981px;height:2.4px;background:#24649c;"></div>
<div class="a" style="left:182px;top:116px;width:981px;height:24px;background:linear-gradient(#fbfcfd,#f1f1f1)"></div>
<svg class="a" style="left:193px;top:120px;" width="18" height="16" viewBox="0 0 18 16"><path d="M1 3 Q1 1.5 2.5 1.5 H6.5 L8 3.5 H15.5 Q17 3.5 17 5 V14 Q17 15 16 15 H2 Q1 15 1 14 Z" fill="#9cc2e2" stroke="#5a7fa5" stroke-width="1"/><rect x="1.5" y="5.5" width="15" height="9" fill="#b7d4ee"/></svg>
<svg class="a" style="left:219px;top:121px;" width="14" height="15" viewBox="0 0 14 15"><rect x="0.5" y="0.5" width="13" height="14" rx="1.5" fill="#4d6f94" stroke="#3e5878"/><rect x="3" y="1" width="8" height="5" fill="#e8eef5"/><rect x="3.5" y="9" width="7" height="5" fill="#cfd9e4"/><rect x="7" y="10" width="2" height="3" fill="#4d6f94"/></svg>
<div class="a" style="left:242.5px;top:122px;width:1px;height:14px;background:#b8b8b8;"></div>
<svg class="a" style="left:249px;top:120px;" width="15" height="16" viewBox="0 0 15 16"><path d="M6 0.5 H14 L9.8 5.6 H13.2 L2.5 15.5 L6 8.3 H2.3 Z" fill="#efc43e" stroke="#b38b22" stroke-width="0.9" stroke-linejoin="round"/><path d="M7 1.5 H12 L8.5 5.8" fill="none" stroke="#fbe9a0" stroke-width="0.8"/></svg>
<svg class="a" style="left:274px;top:120px;" width="15" height="16" viewBox="0 0 15 16"><path d="M6 0.5 H14 L9.8 5.6 H13.2 L2.5 15.5 L6 8.3 H2.3 Z" fill="#efc43e" stroke="#b38b22" stroke-width="0.9" stroke-linejoin="round"/><path d="M7 1.5 H12 L8.5 5.8" fill="none" stroke="#fbe9a0" stroke-width="0.8"/><rect x="4.8" y="8" width="3.5" height="6.5" fill="#f7e6a0" stroke="#6a5a2a" stroke-width="0.8"/></svg>
<svg class="a" style="left:298px;top:120px;" width="17" height="17" viewBox="0 0 17 17"><path d="M7 0.5 L1 8 H5 L2.5 15 L9 8.5" fill="#f2c94c" stroke="#b8902a" stroke-width="0.9"/><circle cx="9" cy="7" r="4.5" fill="#eef2f6" stroke="#3a3a3a" stroke-width="1.4"/><path d="M12 10.5 L16 15" stroke="#3a3a3a" stroke-width="2"/></svg>
<svg class="a" style="left:322px;top:120px;" width="17" height="17" viewBox="0 0 17 17"><path d="M5 0.5 H12 L16.5 5 V12 L12 16.5 H5 L0.5 12 V5 Z" fill="#d9d9d9"/><path d="M6 13 V6 M8 12 V4 M10 12 V4 M12 12 V6" stroke="#f2f2f2" stroke-width="1.4"/></svg>
<div class="a" style="left:346.3px;top:122px;width:1px;height:14px;background:#b8b8b8;"></div>
<svg class="a" style="left:352px;top:120px;" width="16" height="16" viewBox="0 0 16 16"><rect x="0.6" y="0.6" width="14.8" height="14.8" rx="2" fill="#f2f2f2" stroke="#9a9a9a" stroke-width="1.1"/><circle cx="5.3" cy="5.2" r="3.9" fill="#b5232a"/><path d="M3.6 3.5 L7 6.9 M7 3.5 L3.6 6.9" stroke="#fff" stroke-width="1.2"/><circle cx="10.5" cy="10.3" r="4.3" fill="#e0552a"/><circle cx="10.5" cy="10.6" r="2" fill="#f6c6a8"/><rect x="2.5" y="11" width="4" height="2" fill="#555"/></svg>
<div class="a" style="left:376.7px;top:122px;width:1px;height:14px;background:#b8b8b8;"></div>
<svg class="a" style="left:382px;top:120px;" width="17" height="17" viewBox="0 0 17 17"><circle cx="8.5" cy="8.5" r="8" fill="#d6d6d6"/><path d="M5 8.7 L7.5 11.2 L12 6.2" stroke="#f4f4f4" stroke-width="1.8" fill="none"/></svg>
<svg class="a" style="left:407px;top:120px;" width="17" height="17" viewBox="0 0 17 17"><circle cx="8.5" cy="8.5" r="8" fill="#d6d6d6"/><path d="M5.8 5.8 L11.2 11.2 M11.2 5.8 L5.8 11.2" stroke="#f4f4f4" stroke-width="1.8"/></svg>
<svg class="a" style="left:430px;top:118.5px;" width="21" height="20" viewBox="0 0 21 20"><rect x="0.75" y="0.75" width="19.5" height="18.5" rx="1" fill="#eef3f8" stroke="#3b74b0" stroke-width="1.5"/><rect x="2.8" y="2.8" width="15.4" height="14.4" rx="2" fill="#e9e2cf" stroke="#b9b2a0" stroke-width="0.8"/><path d="M9.5 3.5 H14 L11.5 6.8 H13.5 L6 13 L8.3 8.8 H6 Z" fill="#eec43e" stroke="#a88a2a" stroke-width="0.6"/><circle cx="12.2" cy="12.5" r="3.8" fill="#4f84d4"/><path d="M10.4 12.4 L11.8 13.8 L14.2 11.3" stroke="#fff" stroke-width="1" fill="none"/></svg>
<div class="a" style="left:456px;top:122px;width:1px;height:14px;background:#b8b8b8;"></div>
<div class="a" style="left:459.6px;top:119px;width:112.4px;height:19px;background:#ffffff;"></div>
<div class="t" id="t44" style="left:464.4px;top:123.84px;font-size:10px;color:#1e1e1e;font-weight:400;font-family:'Liberation Sans',sans-serif;transform:scaleX(0.9289);">Don't Limit</div>
<svg class="a" style="left:562px;top:127px;" width="7" height="4" viewBox="0 0 7 4"><path d="M0 0 H7 L3.5 4 Z" fill="#222"/></svg>
<div class="a" style="left:575.6px;top:122px;width:1px;height:14px;background:#b8b8b8;"></div>
<svg class="a" style="left:582px;top:120px;" width="17" height="17" viewBox="0 0 17 17"><path d="M7.5 0.5 L9.6 5.3 L14.5 5.6 L10.7 8.8 L12 13.8 L7.5 11 L3 13.8 L4.3 8.8 L0.5 5.6 L5.4 5.3 Z" fill="#f0c53a" stroke="#b88f1c" stroke-width="0.8"/><circle cx="12.5" cy="12.5" r="3.8" fill="#5cb85c" stroke="#3a8a3a" stroke-width="0.6"/><path d="M10.5 12.5 H14.5 M12.5 10.5 V14.5" stroke="#fff" stroke-width="1.2"/></svg>
<div class="a" style="left:606.7px;top:122px;width:1px;height:14px;background:#b8b8b8;"></div>
<svg class="a" style="left:612px;top:120px;" width="16" height="17" viewBox="0 0 16 17"><path d="M9 7 L14.5 1" stroke="#8a5a2a" stroke-width="1.8"/><path d="M1 14 Q3 8 9 6.5 L11 9 Q9 14 3 16 Z" fill="#c9a25a" stroke="#8a6a3a" stroke-width="0.8"/><path d="M0.5 16.3 H12" stroke="#bbb" stroke-width="1"/></svg>
<svg class="a" style="left:637px;top:120px;" width="15" height="16" viewBox="0 0 15 16"><circle cx="6" cy="6" r="4.8" fill="#f4f4f4" stroke="#555" stroke-width="1.3"/><text x="3.6" y="8.3" font-size="6" font-family="Liberation Sans" fill="#888">A</text><path d="M9.5 9.5 L14 14.5" stroke="#555" stroke-width="1.8"/></svg>
<svg class="a" style="left:661px;top:120px;" width="16" height="17" viewBox="0 0 16 17"><rect x="0.5" y="0.5" width="15" height="16" rx="2" fill="#f4f4f4" stroke="#9c9c9c"/><path d="M7 3 H12 M8.5 3 V14 M10.5 3 V14" stroke="#333" stroke-width="1.2"/><path d="M8.5 3 Q4 3 4 6 Q4 9 8.5 9 Z" fill="#333"/></svg>
<svg class="a" style="left:686px;top:120px;" width="16" height="17" viewBox="0 0 16 17"><rect x="0.5" y="0.5" width="15" height="16" rx="2" fill="#f4f4f4" stroke="#9c9c9c"/><path d="M4 5 H11 Q12.5 5 12.5 7.5 Q12.5 10 11 10 H5 M7 8 L5 10 L7 12" stroke="#333" stroke-width="1.2" fill="none"/></svg>
<div class="a" style="left:182px;top:140px;width:981px;height:244px;background:#ffffff;"></div>
<div class="t" style="left:247px;top:147.12px;font-size:10.667px;font-family:'Liberation Mono',monospace"><span style="color:#1a6cb2">SET</span><span style="color:#1c1c1c"> sql_mode = </span><span style="color:#d28a2e">''</span><span style="color:#1c1c1c">;</span></div>
<div class="t" style="left:206.0px;top:147.12px;font-size:10.667px;font-family:'Liberation Mono',monospace;color:#40709f">1</div>
<div class="t" style="left:247px;top:166.20px;font-size:10.667px;font-family:'Liberation Mono',monospace"><span style="color:#1a6cb2">SELECT</span></div>
<div class="t" style="left:206.0px;top:166.20px;font-size:10.667px;font-family:'Liberation Mono',monospace;color:#40709f">2</div>
<div class="t" style="left:247px;top:185.28px;font-size:10.667px;font-family:'Liberation Mono',monospace"><span style="color:#1c1c1c">    *</span></div>
<div class="t" style="left:206.0px;top:185.28px;font-size:10.667px;font-family:'Liberation Mono',monospace;color:#40709f">3</div>
<div class="t" style="left:247px;top:204.36px;font-size:10.667px;font-family:'Liberation Mono',monospace"><span style="color:#1a6cb2">FROM</span></div>
<div class="t" style="left:206.0px;top:204.36px;font-size:10.667px;font-family:'Liberation Mono',monospace;color:#40709f">4</div>
<div class="t" style="left:247px;top:223.44px;font-size:10.667px;font-family:'Liberation Mono',monospace"><span style="color:#1c1c1c">    customer_churn.subscriptions s1</span></div>
<div class="t" style="left:206.0px;top:223.44px;font-size:10.667px;font-family:'Liberation Mono',monospace;color:#40709f">5</div>
<div class="t" style="left:247px;top:242.52px;font-size:10.667px;font-family:'Liberation Mono',monospace"><span style="color:#1a6cb2">JOIN</span></div>
<div class="t" style="left:206.0px;top:242.52px;font-size:10.667px;font-family:'Liberation Mono',monospace;color:#40709f">6</div>
<div class="t" style="left:247px;top:261.60px;font-size:10.667px;font-family:'Liberation Mono',monospace"><span style="color:#1c1c1c">    subscriptions s2 </span><span style="color:#1a6cb2">ON</span><span style="color:#1c1c1c"> (s1.student_id = s2.student_id </span><span style="color:#1a6cb2">and</span><span style="color:#1c1c1c"> s1.subscription_id != s2.subscription_id</span></div>
<div class="t" style="left:206.0px;top:261.60px;font-size:10.667px;font-family:'Liberation Mono',monospace;color:#40709f">7</div>
<div class="t" style="left:247px;top:280.68px;font-size:10.667px;font-family:'Liberation Mono',monospace"><span style="color:#1c1c1c">                     </span><span style="color:#1a6cb2">and</span><span style="color:#1c1c1c"> s2.subscription_id &gt; s1.subscription_id </span><span style="color:#1a6cb2">and</span><span style="color:#1c1c1c"> s2.created_date &gt; s1.created_date)</span></div>
<div class="t" style="left:206.0px;top:280.68px;font-size:10.667px;font-family:'Liberation Mono',monospace;color:#40709f">8</div>
<div class="t" style="left:247px;top:299.76px;font-size:10.667px;font-family:'Liberation Mono',monospace"><span style="color:#1a6cb2">WHERE</span></div>
<div class="t" style="left:206.0px;top:299.76px;font-size:10.667px;font-family:'Liberation Mono',monospace;color:#40709f">9</div>
<div class="t" style="left:247px;top:318.84px;font-size:10.667px;font-family:'Liberation Mono',monospace"><span style="color:#1c1c1c">    s1.state = </span><span style="color:#cc8a3c">3</span></div>
<div class="t" style="left:199.5px;top:318.84px;font-size:10.667px;font-family:'Liberation Mono',monospace;color:#40709f">10</div>
<div class="t" style="left:247px;top:337.92px;font-size:10.667px;font-family:'Liberation Mono',monospace"><span style="color:#1c1c1c">    </span><span style="color:#1a6cb2">AND</span><span style="color:#1c1c1c"> </span><span style="color:#8c8c8c">datediff</span><span style="color:#1c1c1c">(</span><span style="color:#8c8c8c">cast</span><span style="color:#1c1c1c">(s2.created_date </span><span style="color:#1a6cb2">as</span><span style="color:#1c1c1c"> </span><span style="color:#1a6cb2">date</span><span style="color:#1c1c1c">), </span><span style="color:#8c8c8c">cast</span><span style="color:#1c1c1c">(s1.end_date </span><span style="color:#1a6cb2">as</span><span style="color:#1c1c1c"> </span><span style="color:#1a6cb2">date</span><span style="color:#1c1c1c">)) &gt; </span><span style="color:#cc8a3c">1</span></div>
<div class="t" style="left:199.5px;top:337.92px;font-size:10.667px;font-family:'Liberation Mono',monospace;color:#40709f">11</div>
<div class="t" style="left:247px;top:357.00px;font-size:10.667px;font-family:'Liberation Mono',monospace"><span style="color:#1a6cb2">GROUP BY</span><span style="color:#1c1c1c"> s1.student_id;</span></div>
<div class="t" style="left:199.5px;top:357.00px;font-size:10.667px;font-family:'Liberation Mono',monospace;color:#40709f">12</div>
<div class="a" style="left:219.5px;top:147.7px;width:5px;height:5px;border-radius:50%;background:#1a78d2"></div>
<div class="a" style="left:219.5px;top:166.8px;width:5px;height:5px;border-radius:50%;background:#1a78d2"></div>
<svg class="a" style="left:230px;top:257px;" width="12" height="30" viewBox="0 0 12 30"><circle cx="5.5" cy="5.5" r="4.3" fill="#fff" stroke="#9a9a9a" stroke-width="1"/><path d="M3.3 5.5 H7.7" stroke="#8a8a8a" stroke-width="1"/><path d="M5.5 9.8 V25 Q5.5 27 7.5 27 H10" stroke="#a8a8a8" stroke-width="1" fill="none"/></svg>
<div class="a" style="left:269.3px;top:314.9px;width:83.2px;height:15.9px;background:transparent;border:2px solid #d8231f"></div>
<div class="t" id="t45" style="left:366.6px;top:310.53px;font-size:23px;color:#e3141b;font-weight:700;font-family:'Liberation Sans',sans-serif;transform:scaleX(1.0735);-webkit-text-stroke:0.6px #d8101a;">deactivated ?</div>
<div class="a" style="left:182px;top:384px;width:981px;height:15px;background:#f0f0f0;"></div>
<div class="a" style="left:198px;top:385px;width:475.2px;height:13px;background:#c9c9c9;"></div>
<svg class="a" style="left:186px;top:387px;" width="7" height="9" viewBox="0 0 7 9"><path d="M5.5 0.8 L1.5 4.5 L5.5 8.2" fill="none" stroke="#333" stroke-width="1.4"/></svg>
<svg class="a" style="left:1154px;top:387px;" width="7" height="9" viewBox="0 0 7 9"><path d="M1.5 0.8 L5.5 4.5 L1.5 8.2" fill="none" stroke="#333" stroke-width="1.4"/></svg>
<div class="a" style="left:182px;top:399px;width:928px;height:26px;background:#f3f3f3;"></div>
<div class="a" style="left:185.7px;top:405px;width:1px;height:17px;background:#b5b5b5;"></div>
<div class="t" id="t46" style="left:193px;top:410.54px;font-size:10px;color:#222;font-weight:700;font-family:'Liberation Sans',sans-serif;transform:scaleX(0.9183);">Result Grid</div>
<div class="a" style="left:249px;top:405px;width:1px;height:17px;background:#b5b5b5;"></div>
<svg class="a" style="left:255px;top:409px;" width="12" height="13" viewBox="0 0 12 13"><rect x="0.5" y="0.5" width="11" height="12" fill="#f3d24a" stroke="#b99a2a" stroke-width="0.8"/><path d="M3.5 1 V12 M8.5 1 V12 M1 4 H3.5 M1 7 H3.5 M1 10 H3.5 M8.5 4 H11 M8.5 7 H11 M8.5 10 H11" stroke="#8a7a3a" stroke-width="0.7"/></svg>
<svg class="a" style="left:280px;top:408px;" width="15" height="14" viewBox="0 0 15 14"><path d="M2 7 Q2 2 7.5 2 L7.5 0 L11.5 3.5 L7.5 7 L7.5 5 Q4.5 5 4.5 7 Z" fill="#2f86d6"/><path d="M13 7 Q13 12 7.5 12 L7.5 14 L3.5 10.5 L7.5 7 L7.5 9 Q10.5 9 10.5 7 Z" fill="#2f86d6"/></svg>
<div class="t" id="t47" style="left:302.6px;top:410.84px;font-size:10px;color:#333;font-weight:400;font-family:'Liberation Sans',sans-serif;transform:scaleX(0.8940);">Filter Rows:</div>
<div class="a" style="left:354.3px;top:406px;width:91.2px;height:17.3px;background:#ffffff;border:1px solid #8a8a8a"></div>
<div class="a" style="left:450px;top:406px;width:1px;height:17px;background:#b5b5b5;"></div>
<div class="t" id="t48" style="left:454.5px;top:410.84px;font-size:10px;color:#333;font-weight:400;font-family:'Liberation Sans',sans-serif;transform:scaleX(0.9436);">Export:</div>
<svg class="a" style="left:491px;top:407px;" width="18" height="16" viewBox="0 0 18 16"><rect x="0.5" y="0.5" width="12" height="13" fill="#eee" stroke="#999" stroke-width="0.8"/><path d="M4 1 V13 M8 1 V13 M1 4 H12 M1 7 H12 M1 10 H12" stroke="#aaa" stroke-width="0.6"/><rect x="7" y="6" width="10.5" height="9.5" rx="1" fill="#3d6f9e"/><rect x="9" y="6.5" width="6" height="3.5" fill="#dfe8f0"/></svg>
<div class="a" style="left:515px;top:406px;width:1px;height:17px;background:#b5b5b5;"></div>
<div class="t" id="t49" style="left:519.7px;top:410.84px;font-size:10px;color:#333;font-weight:400;font-family:'Liberation Sans',sans-serif;transform:scaleX(0.9372);">Wrap Cell Content:</div>
<svg class="a" style="left:607px;top:409px;" width="12" height="13" viewBox="0 0 12 13"><path d="M2 1 V12 M0 3 L2 1 L4 3 M0 10 L2 12 L4 10" stroke="#333" stroke-width="0.9" fill="none"/><text x="5" y="10" font-size="8" font-family="Liberation Sans" fill="#333">A</text><path d="M0 12.5 H12" stroke="#333" stroke-width="0.8"/></svg>
<svg class="a" style="left:1091px;top:408px;" width="14" height="14" viewBox="0 0 14 14"><rect x="0.75" y="0.75" width="12.5" height="12.5" fill="#fff" stroke="#333" stroke-width="1.3"/><rect x="8" y="1" width="5" height="12" fill="#444"/></svg>
<div class="a" style="left:182.5px;top:425.4px;width:913.5px;height:1.2px;background:#a8a8a8;"></div>
<div class="a" style="left:182.5px;top:425.4px;width:1.2px;height:84px;background:#a8a8a8;"></div>
<div class="a" style="left:183px;top:426.5px;width:913px;height:83px;background:#ffffff;"></div>
<div class="a" style="left:183px;top:449.2px;width:913px;height:1.3px;background:#a9a9a9;"></div>
<div class="a" style="left:206px;top:472px;width:890px;height:21px;background:#e9eef8;"></div>
<div class="a" style="left:205.1px;top:426.5px;width:1px;height:23px;background:#dedede;"></div>
<div class="a" style="left:264.2px;top:426.5px;width:1px;height:23px;background:#dedede;"></div>
<div class="a" style="left:445px;top:426.5px;width:1px;height:23px;background:#dedede;"></div>
<div class="a" style="left:604.2px;top:426.5px;width:1px;height:23px;background:#dedede;"></div>
<div class="a" style="left:763.3px;top:426.5px;width:1px;height:23px;background:#dedede;"></div>
<div class="a" style="left:921.9px;top:426.5px;width:1px;height:23px;background:#dedede;"></div>
<div class="a" style="left:1081.7px;top:426.5px;width:1px;height:23px;background:#dedede;"></div>
<div class="a" style="left:264.2px;top:450.5px;width:1px;height:59px;background:#f2f2f2;"></div>
<div class="a" style="left:445px;top:450.5px;width:1px;height:59px;background:#f2f2f2;"></div>
<div class="a" style="left:604.2px;top:450.5px;width:1px;height:59px;background:#f2f2f2;"></div>
<div class="a" style="left:763.3px;top:450.5px;width:1px;height:59px;background:#f2f2f2;"></div>
<div class="a" style="left:921.9px;top:450.5px;width:1px;height:59px;background:#f2f2f2;"></div>
<div class="a" style="left:1081.7px;top:450.5px;width:1px;height:59px;background:#f2f2f2;"></div>
<div class="a" style="left:183px;top:471.8px;width:22px;height:1px;background:#dadada;"></div>
<div class="a" style="left:183px;top:493.2px;width:22px;height:1px;background:#dadada;"></div>
<div class="a" style="left:205.1px;top:450px;width:1.2px;height:59.3px;background:#c4c4c4;"></div>
<div class="a" style="left:205.8px;top:493px;width:58px;height:16.3px;background:#0b78d7;"></div>
<svg class="a" style="left:188.4px;top:502px;" width="6" height="7" viewBox="0 0 6 7"><path d="M0 0 L5.5 3.3 L0 6.6 Z" fill="#2a2a2a"/></svg>
<div class="t" id="t50" style="left:272.8px;top:431.88px;font-size:14.2px;color:#1a1a1a;font-weight:400;font-family:'Liberation Sans',sans-serif;transform:scaleX(1.0296);">subscription_period_start</div>
<div class="t" id="t51" style="left:453px;top:431.88px;font-size:14.2px;color:#1a1a1a;font-weight:400;font-family:'Liberation Sans',sans-serif;transform:scaleX(0.9848);">cancelled_date</div>
<div class="t" id="t52" style="left:613px;top:431.88px;font-size:14.2px;color:#1a1a1a;font-weight:400;font-family:'Liberation Sans',sans-serif;">next_charge_date</div>
<div class="t" id="t53" style="left:771.6px;top:431.88px;font-size:14.2px;color:#1a1a1a;font-weight:400;font-family:'Liberation Sans',sans-serif;transform:scaleX(1.0046);">updated_date</div>
<div class="t" id="t54" style="left:930.6px;top:431.88px;font-size:14.2px;color:#1a1a1a;font-weight:400;font-family:'Liberation Sans',sans-serif;transform:scaleX(0.9951);">end_date</div>
<div class="t" id="t55" style="left:1087.6px;top:431.88px;font-size:14.2px;color:#1a1a1a;font-weight:400;font-family:'Liberation Sans',sans-serif;">s</div>
<div class="a" style="left:183px;top:426px;width:913px;height:83.3px;overflow:hidden">
<div class="t" id="t56" style="left:23.30000000000001px;top:27.88px;font-size:14.2px;color:#1a1a1a;font-weight:400;font-family:'Liberation Sans',sans-serif;transform:scaleX(1.1229);">:06:58</div>
<div class="t" id="t57" style="left:86px;top:27.88px;font-size:14.2px;color:#1a1a1a;font-weight:400;font-family:'Liberation Sans',sans-serif;transform:scaleX(1.0679);">2021-02-09 19:06:58</div>
<div class="t" id="t58" style="left:426.20000000000005px;top:27.88px;font-size:14.2px;color:#1a1a1a;font-weight:400;font-family:'Liberation Sans',sans-serif;transform:scaleX(1.0725);">2022-02-09 00:00:00</div>
<div class="t" id="t59" style="left:744.1px;top:27.88px;font-size:14.2px;color:#1a1a1a;font-weight:400;font-family:'Liberation Sans',sans-serif;transform:scaleX(1.0717);">2021-02-10 00:00:00</div>
<div class="t" id="t60" style="left:902.9000000000001px;top:27.88px;font-size:14.2px;color:#1a1a1a;font-weight:400;font-family:'Liberation Sans',sans-serif;">3</div>
<div class="t" id="t61" style="left:23.30000000000001px;top:50.18px;font-size:14.2px;color:#1a1a1a;font-weight:400;font-family:'Liberation Sans',sans-serif;transform:scaleX(1.1229);">:44:10</div>
<div class="t" id="t62" style="left:86px;top:50.18px;font-size:14.2px;color:#1a1a1a;font-weight:400;font-family:'Liberation Sans',sans-serif;transform:scaleX(1.0679);">2021-01-09 02:00:00</div>
<div class="t" id="t63" style="left:267.2px;top:50.18px;font-size:14.2px;color:#1a1a1a;font-weight:400;font-family:'Liberation Sans',sans-serif;transform:scaleX(1.0702);">2021-01-09 02:00:00</div>
<div class="t" id="t64" style="left:426.20000000000005px;top:50.18px;font-size:14.2px;color:#1a1a1a;font-weight:400;font-family:'Liberation Sans',sans-serif;transform:scaleX(1.0725);">2021-02-09 02:00:00</div>
<div class="t" id="t65" style="left:744.1px;top:50.18px;font-size:14.2px;color:#1a1a1a;font-weight:400;font-family:'Liberation Sans',sans-serif;transform:scaleX(1.0717);">2021-02-09 00:00:00</div>
<div class="t" id="t66" style="left:902.9000000000001px;top:50.18px;font-size:14.2px;color:#1a1a1a;font-weight:400;font-family:'Liberation Sans',sans-serif;">3</div>
<div class="t" id="t67" style="left:23.30000000000001px;top:72.48px;font-size:14.2px;color:#ffffff;font-weight:400;font-family:'Liberation Sans',sans-serif;transform:scaleX(1.1229);">:41:33</div>
<div class="t" id="t68" style="left:86px;top:72.48px;font-size:14.2px;color:#1a1a1a;font-weight:400;font-family:'Liberation Sans',sans-serif;transform:scaleX(1.0679);">2021-01-30 21:41:33</div>
<div class="t" id="t69" style="left:267.2px;top:72.48px;font-size:14.2px;color:#1a1a1a;font-weight:400;font-family:'Liberation Sans',sans-serif;transform:scaleX(1.0702);">2021-02-27 00:00:00</div>
<div class="t" id="t70" style="left:426.20000000000005px;top:72.48px;font-size:14.2px;color:#1a1a1a;font-weight:400;font-family:'Liberation Sans',sans-serif;transform:scaleX(1.0725);">2021-02-28 00:00:00</div>
<div class="t" id="t71" style="left:744.1px;top:72.48px;font-size:14.2px;color:#1a1a1a;font-weight:400;font-family:'Liberation Sans',sans-serif;transform:scaleX(1.0717);">2021-02-28 00:00:00</div>
<div class="t" id="t72" style="left:902.9000000000001px;top:72.48px;font-size:14.2px;color:#1a1a1a;font-weight:400;font-family:'Liberation Sans',sans-serif;">3</div>
</div>
<div class="a" style="left:446.3px;top:451.2px;width:19.5px;height:6.5px;background:#7d7d7d;overflow:hidden"><div class="t" style="left:2px;top:0.6px;font-size:5.5px;font-weight:bold;color:#f0f0f0;transform:scaleX(0.95)">NULL</div></div>
<div class="a" style="left:764.2px;top:451.5px;width:19.5px;height:6.5px;background:#7d7d7d;overflow:hidden"><div class="t" style="left:2px;top:0.6px;font-size:5.5px;font-weight:bold;color:#f0f0f0;transform:scaleX(0.95)">NULL</div></div>
<div class="a" style="left:764.2px;top:473.3px;width:19.5px;height:6.5px;background:#7d7d7d;overflow:hidden"><div class="t" style="left:2px;top:0.6px;font-size:5.5px;font-weight:bold;color:#f0f0f0;transform:scaleX(0.95)">NULL</div></div>
<div class="a" style="left:764.2px;top:495.1px;width:19.5px;height:6.5px;background:#7d7d7d;overflow:hidden"><div class="t" style="left:2px;top:0.6px;font-size:5.5px;font-weight:bold;color:#f0f0f0;transform:scaleX(0.95)">NULL</div></div>
<div class="a" style="left:1096px;top:426.5px;width:13.5px;height:83px;background:#f0f0f0;"></div>
<div class="a" style="left:1096.5px;top:441.3px;width:12.5px;height:14.7px;background:#cdcdcd;"></div>
<svg class="a" style="left:1098.5px;top:431px;" width="9" height="6" viewBox="0 0 9 6"><path d="M0.8 5 L4.5 1.2 L8.2 5" fill="none" stroke="#333" stroke-width="1.3"/></svg>
<svg class="a" style="left:1098.5px;top:499px;" width="9" height="6" viewBox="0 0 9 6"><path d="M0.8 1 L4.5 4.8 L8.2 1" fill="none" stroke="#333" stroke-width="1.3"/></svg>
<div class="a" style="left:183px;top:509.3px;width:913px;height:14px;background:#f0f0f0;"></div>
<div class="a" style="left:296px;top:510.4px;width:289px;height:12.6px;background:#5d5d5d;"></div>
<svg class="a" style="left:186px;top:512px;" width="7" height="9" viewBox="0 0 7 9"><path d="M5.5 0.8 L1.5 4.5 L5.5 8.2" fill="none" stroke="#333" stroke-width="1.4"/></svg>
<svg class="a" style="left:1085px;top:512px;" width="7" height="9" viewBox="0 0 7 9"><path d="M1.5 0.8 L5.5 4.5 L1.5 8.2" fill="none" stroke="#333" stroke-width="1.4"/></svg>
<div class="a" style="left:1110.4px;top:404.2px;width:53.2px;height:62.4px;background:#0b78d4;"></div>
<svg class="a" style="left:1110.4px;top:429.5px;" width="7" height="13" viewBox="0 0 7 13"><path d="M0 0 L6.5 6.5 L0 13 Z" fill="#f4f4f4"/></svg>
<svg class="a" style="left:1125.5px;top:408.5px;" width="24" height="25" viewBox="0 0 24 25"><rect x="0.75" y="0.75" width="22.5" height="23.5" rx="1.5" fill="#ffffff" stroke="#e8f1fb" stroke-width="1.5"/><rect x="3" y="4" width="18" height="18" fill="#0b78d4"/><path d="M3 7.5 H21 M3 11 H21 M3 14.5 H21 M3 18 H21" stroke="#fff" stroke-width="1.1"/><path d="M8.5 4 V22 M15 4 V22" stroke="#fff" stroke-width="1"/></svg>
<div class="t" id="t73" style="left:1124.4px;top:440.13px;font-size:9.3px;color:#ffffff;font-weight:400;font-family:'Liberation Sans',sans-serif;transform:scaleX(0.9029);">Result</div>
<div class="t" id="t74" style="left:1127px;top:449.13px;font-size:9.3px;color:#ffffff;font-weight:400;font-family:'Liberation Sans',sans-serif;transform:scaleX(1.0468);">Grid</div>
<div class="a" style="left:1110.4px;top:466.6px;width:53.2px;height:54px;background:#e6e6e6;"></div>
<svg class="a" style="left:1127px;top:490px;" width="20" height="30" viewBox="0 0 20 30"><path d="M3 10 L10 3 L17 10" stroke="#d0d0d0" stroke-width="3" fill="none"/><path d="M3 18 L10 25 L17 18" stroke="#d0d0d0" stroke-width="3" fill="none"/></svg>
<div class="a" style="left:182px;top:524.2px;width:981px;height:13px;background:#e8e8e8;"></div>
<div class="a" style="left:183px;top:524.2px;width:64.1px;height:13px;background:#fcfcfc;"></div>
<div class="a" style="left:183px;top:524.2px;width:980px;height:13px;overflow:hidden">
<div class="t" id="t75" style="left:6.400000000000006px;top:3.91px;font-size:10.5px;color:#3c7bbd;font-weight:400;font-family:'Liberation Sans',sans-serif;transform:scaleX(0.9629);">Result 3</div>
</div>
<svg class="a" style="left:234.5px;top:530.5px;" width="7" height="7" viewBox="0 0 7 7"><path d="M0.5 0.5 L6.5 6.5 M6.5 0.5 L0.5 6.5" stroke="#444" stroke-width="1"/></svg>
<div class="a" style="left:1090px;top:524px;width:75px;height:13px;overflow:hidden">
<svg class="a" style="left:5.7px;top:4px;" width="9.3" height="9.5" viewBox="0 0 9.3 9.5"><circle cx="4.65" cy="4.75" r="4.5" fill="#2a78c8"/><rect x="3.9" y="3.8" width="1.5" height="4" fill="#fff"/><circle cx="4.65" cy="2.3" r="0.9" fill="#fff"/></svg>
<div class="t" id="t76" style="left:23px;top:4.71px;font-size:10.5px;color:#222;font-weight:400;font-family:'Liberation Sans',sans-serif;transform:scaleX(0.9373);">Read Only</div>
</div>
<div class="a" style="left:183.4px;top:542.5px;width:979px;height:18.5px;background:#e7e7e7;"></div>
<div class="t" id="t77" style="left:189.2px;top:546.49px;font-size:11px;color:#6a6a6a;font-weight:400;font-family:'Liberation Sans',sans-serif;transform:scaleX(0.9143);">Output</div>
<svg class="a" style="left:225px;top:547px;" width="937" height="7" viewBox="0 0 937 7"><defs><pattern id="dp3" width="3" height="3" patternUnits="userSpaceOnUse"><rect x="0" y="0" width="1.1" height="1.1" fill="#b4b4b4"/><rect x="1.5" y="1.5" width="1.1" height="1.1" fill="#b4b4b4"/></pattern></defs><rect width="937" height="7" fill="url(#dp3)"/></svg>
<div class="a" style="left:183px;top:561px;width:980px;height:24.2px;background:#f6f6f6;"></div>
<svg class="a" style="left:189px;top:566px;" width="14" height="15" viewBox="0 0 14 15"><rect x="0.6" y="4.6" width="8.8" height="9.8" fill="#fff" stroke="#444" stroke-width="1.2"/><path d="M3 4.5 V2.6 H11.4 V11.4 H9.5 M5.3 2.5 V0.6 H13.4 V9.4 H11.5" fill="none" stroke="#444" stroke-width="1.1"/></svg>
<div class="a" style="left:208px;top:565.4px;width:136.2px;height:18.8px;background:#ffffff;"></div>
<div class="a" style="left:334px;top:565.4px;width:10.2px;height:18.8px;background:#ededed;"></div>
<div class="t" id="t78" style="left:212px;top:569.53px;font-size:10px;color:#1e1e1e;font-weight:400;font-family:'Liberation Sans',sans-serif;transform:scaleX(0.9605);">Action Output</div>
<svg class="a" style="left:336.5px;top:573px;" width="6" height="4" viewBox="0 0 6 4"><path d="M0 0 H6 L3 4 Z" fill="#222"/></svg>
<div class="a" style="left:182.7px;top:585.2px;width:982.3px;height:69.2px;background:#ffffff;"></div>
<div class="a" style="left:202.7px;top:587px;width:1px;height:16px;background:#e2e2e2;"></div>
<div class="a" style="left:235.3px;top:587px;width:1px;height:16px;background:#e2e2e2;"></div>
<div class="a" style="left:281.4px;top:587px;width:1px;height:16px;background:#e2e2e2;"></div>
<div class="a" style="left:663.4px;top:587px;width:1px;height:16px;background:#e2e2e2;"></div>
<div class="a" style="left:1044.7px;top:587px;width:1px;height:16px;background:#e2e2e2;"></div>
<div class="a" style="left:1147.6px;top:587px;width:1px;height:16px;background:#e2e2e2;"></div>
<div class="a" style="left:184px;top:603px;width:963.6px;height:18.5px;background:#e9eef8;"></div>
<div class="t" id="t79" style="left:208.3px;top:589.68px;font-size:9px;color:#222;font-weight:400;font-family:'Liberation Sans',sans-serif;transform:scaleX(0.9969);">#</div>
<div class="t" id="t80" style="left:241.2px;top:589.68px;font-size:9px;color:#222;font-weight:400;font-family:'Liberation Sans',sans-serif;transform:scaleX(0.9608);">Time</div>
<div class="t" id="t81" style="left:287.8px;top:589.68px;font-size:9px;color:#222;font-weight:400;font-family:'Liberation Sans',sans-serif;transform:scaleX(1.0274);">Action</div>
<div class="t" id="t82" style="left:669.2px;top:589.68px;font-size:9px;color:#222;font-weight:400;font-family:'Liberation Sans',sans-serif;transform:scaleX(0.9362);">Message</div>
<div class="t" id="t83" style="left:1050.5px;top:589.68px;font-size:9px;color:#222;font-weight:400;font-family:'Liberation Sans',sans-serif;transform:scaleX(1.0214);">Duration / Fetch</div>
<div class="t" id="t84" style="left:219.9px;top:606.74px;font-size:10px;color:#1e1e1e;font-weight:400;font-family:'Liberation Sans',sans-serif;transform:scaleX(0.9888);">60</div>
<div class="t" id="t85" style="left:239.1px;top:606.74px;font-size:10px;color:#1e1e1e;font-weight:400;font-family:'Liberation Sans',sans-serif;transform:scaleX(0.9554);">13:48:58</div>
<div class="t" id="t86" style="left:666.8px;top:606.74px;font-size:10px;color:#1e1e1e;font-weight:400;font-family:'Liberation Sans',sans-serif;transform:scaleX(0.9529);">0 row(s) affected</div>
<div class="t" id="t87" style="left:1047.5px;top:606.74px;font-size:10px;color:#1e1e1e;font-weight:400;font-family:'Liberation Sans',sans-serif;transform:scaleX(0.9775);">0.000 sec</div>
<div class="t" id="t88" style="left:219.9px;top:626.74px;font-size:10px;color:#1e1e1e;font-weight:400;font-family:'Liberation Sans',sans-serif;transform:scaleX(0.9888);">61</div>
<div class="t" id="t89" style="left:239.1px;top:626.74px;font-size:10px;color:#1e1e1e;font-weight:400;font-family:'Liberation Sans',sans-serif;transform:scaleX(0.9554);">13:48:58</div>
<div class="t" id="t90" style="left:666.8px;top:626.74px;font-size:10px;color:#1e1e1e;font-weight:400;font-family:'Liberation Sans',sans-serif;transform:scaleX(0.9408);">433 row(s) returned</div>
<div class="t" id="t91" style="left:1047.5px;top:626.74px;font-size:10px;color:#1e1e1e;font-weight:400;font-family:'Liberation Sans',sans-serif;transform:scaleX(1.0118);">0.047 sec /</div>
<div class="t" id="t92" style="left:285.3px;top:606.74px;font-size:10px;color:#1e1e1e;font-weight:400;font-family:'Liberation Sans',sans-serif;transform:scaleX(0.9699);">SET sql_mode = ''</div>
<div class="t" id="t93" style="left:285.3px;top:626.74px;font-size:10px;color:#1e1e1e;font-weight:400;font-family:'Liberation Sans',sans-serif;transform:scaleX(0.9536);">SELECT</div>
<div class="t" id="t94" style="left:339px;top:626.74px;font-size:10px;color:#1e1e1e;font-weight:400;font-family:'Liberation Sans',sans-serif;transform:scaleX(0.9416);">* FROM</div>
<div class="t" id="t95" style="left:387.3px;top:626.74px;font-size:10px;color:#1e1e1e;font-weight:400;font-family:'Liberation Sans',sans-serif;transform:scaleX(0.9612);">customer_churn.subscriptions s1  JOIN subscriptions s2 ON (...</div>
<svg class="a" style="left:187.3px;top:607.7px;" width="10.3" height="10.3" viewBox="0 0 10.3 10.3"><circle cx="5.15" cy="5.15" r="5" fill="#1f8a3f"/><path d="M2.7 5.3 L4.5 7.1 L7.7 3.7" stroke="#fff" stroke-width="1.5" fill="none"/></svg>
<svg class="a" style="left:187.3px;top:628.2px;" width="10.3" height="10.3" viewBox="0 0 10.3 10.3"><circle cx="5.15" cy="5.15" r="5" fill="#1f8a3f"/><path d="M2.7 5.3 L4.5 7.1 L7.7 3.7" stroke="#fff" stroke-width="1.5" fill="none"/></svg>
<div class="a" style="left:1148px;top:585.2px;width:17px;height:69.2px;background:#f6f6f6;"></div>
<svg class="a" style="left:1152px;top:591px;" width="9" height="6" viewBox="0 0 9 6"><path d="M0.8 5 L4.5 1.2 L8.2 5" fill="none" stroke="#333" stroke-width="1.3"/></svg>
<div class="a" style="left:0px;top:654.5px;width:1170px;height:3.5px;background:#dcdcdc;"></div>
<div class="a" style="left:745px;top:655px;width:128.5px;height:3px;background:#8c8c8c;"></div>
<div class="a" style="left:873.5px;top:655px;width:296.5px;height:3px;background:#555555;"></div>
<div class="a" style="left:1099.5px;top:626px;width:67.8px;height:27.3px;background:#0c141f;border-radius:4px"></div>
<div class="t" id="t96" style="left:1105.7px;top:632.56px;font-size:18px;color:#ffffff;font-weight:400;font-family:'Liberation Sans',sans-serif;transform:scaleX(1.1848);-webkit-text-stroke:0.4px #fff;">365</div>
<svg class="a" style="left:1140px;top:627px;" width="22" height="24" viewBox="0 0 22 24"><path d="M4.8 11 L12 19.5 L18.5 4.4" stroke="#fff" stroke-width="1.2" fill="none"/><circle cx="4.8" cy="11" r="2.5" fill="#fff"/><circle cx="12" cy="19.5" r="2.7" fill="#fff"/><circle cx="18.5" cy="4.4" r="2.7" fill="#fff"/></svg>
<svg class="a" style="left:545px;top:518px;" width="13" height="20" viewBox="0 0 13 20"><path d="M1 1 V15.5 L4.5 12.2 L7.2 18.2 L9.6 17.1 L7 11.3 L11.8 11.3 Z" fill="#fff" stroke="#111" stroke-width="1.1" stroke-linejoin="round"/></svg>
</body></html>
